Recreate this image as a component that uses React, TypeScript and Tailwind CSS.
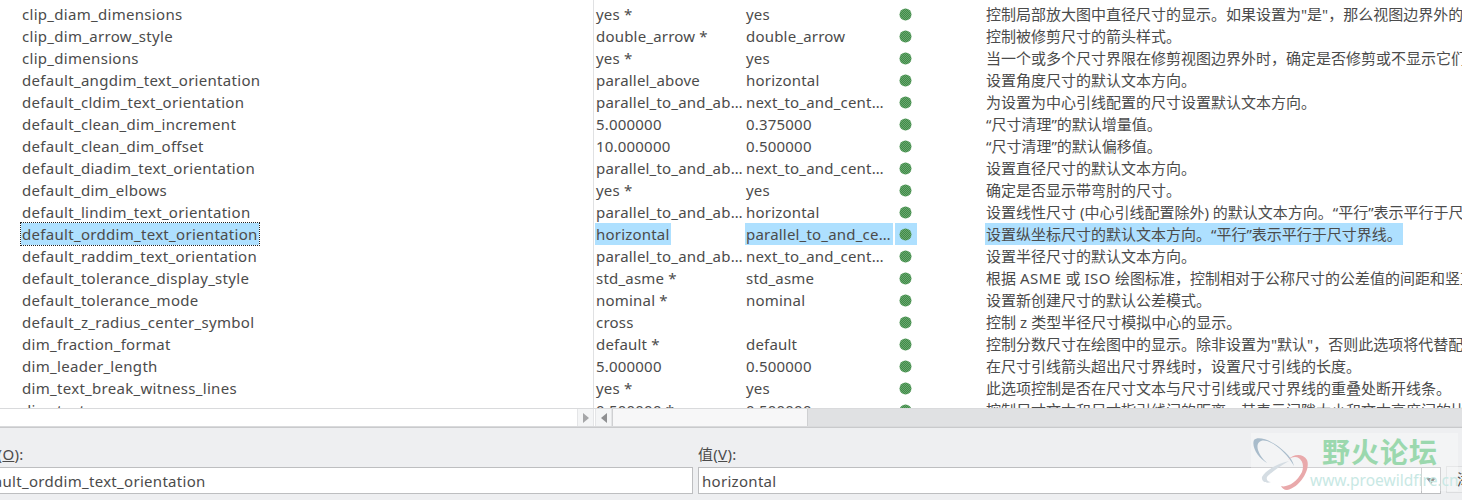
type Row = {
  name: string
  value: string
  active: string
  description: string
  selected?: boolean
}

const rows: Row[] = [
  { name: 'center_leader_size', value: 'no', active: 'no', description: '控制中心引线的大小。' },
  { name: 'clip_diam_dimensions', value: 'yes *', active: 'yes', description: '控制局部放大图中直径尺寸的显示。如果设置为"是"，那么视图边界外的尺寸将被修剪。' },
  { name: 'clip_dim_arrow_style', value: 'double_arrow *', active: 'double_arrow', description: '控制被修剪尺寸的箭头样式。' },
  { name: 'clip_dimensions', value: 'yes *', active: 'yes', description: '当一个或多个尺寸界限在修剪视图边界外时，确定是否修剪或不显示它们。' },
  { name: 'default_angdim_text_orientation', value: 'parallel_above', active: 'horizontal', description: '设置角度尺寸的默认文本方向。' },
  { name: 'default_cldim_text_orientation', value: 'parallel_to_and_above_leader', active: 'next_to_and_centered', description: '为设置为中心引线配置的尺寸设置默认文本方向。' },
  { name: 'default_clean_dim_increment', value: '5.000000', active: '0.375000', description: '“尺寸清理”的默认增量值。' },
  { name: 'default_clean_dim_offset', value: '10.000000', active: '0.500000', description: '“尺寸清理”的默认偏移值。' },
  { name: 'default_diadim_text_orientation', value: 'parallel_to_and_above_leader', active: 'next_to_and_centered', description: '设置直径尺寸的默认文本方向。' },
  { name: 'default_dim_elbows', value: 'yes *', active: 'yes', description: '确定是否显示带弯肘的尺寸。' },
  { name: 'default_lindim_text_orientation', value: 'parallel_to_and_above_leader', active: 'horizontal', description: '设置线性尺寸 (中心引线配置除外) 的默认文本方向。“平行”表示平行于尺寸界线。' },
  { name: 'default_orddim_text_orientation', value: 'horizontal', active: 'parallel_to_and_centered', description: '设置纵坐标尺寸的默认文本方向。“平行”表示平行于尺寸界线。', selected: true },
  { name: 'default_raddim_text_orientation', value: 'parallel_to_and_above_leader', active: 'next_to_and_centered', description: '设置半径尺寸的默认文本方向。' },
  { name: 'default_tolerance_display_style', value: 'std_asme *', active: 'std_asme', description: '根据 ASME 或 ISO 绘图标准，控制相对于公称尺寸的公差值的间距和竖直对齐。' },
  { name: 'default_tolerance_mode', value: 'nominal *', active: 'nominal', description: '设置新创建尺寸的默认公差模式。' },
  { name: 'default_z_radius_center_symbol', value: 'cross', active: '', description: '控制 z 类型半径尺寸模拟中心的显示。' },
  { name: 'dim_fraction_format', value: 'default *', active: 'default', description: '控制分数尺寸在绘图中的显示。除非设置为"默认"，否则此选项将代替配置文件设置。' },
  { name: 'dim_leader_length', value: '5.000000', active: '0.500000', description: '在尺寸引线箭头超出尺寸界线时，设置尺寸引线的长度。' },
  { name: 'dim_text_break_witness_lines', value: 'yes *', active: 'yes', description: '此选项控制是否在尺寸文本与尺寸引线或尺寸界线的重叠处断开线条。' },
  { name: 'dim_text_gap', value: '0.500000 *', active: '0.500000', description: '控制尺寸文本和尺寸指引线间的距离。其表示间隙大小和文本高度间的比值。' },
]

const uiFont = "font-['Noto_Sans','Noto_Sans_CJK_SC',sans-serif]"

const StatusDot = () => (
  <svg width="13" height="13" viewBox="0 0 13 13">
    <defs>
      <pattern id="dot-dither" width="2" height="2" patternUnits="userSpaceOnUse">
        <rect width="2" height="2" fill="#6aa86e" />
        <rect width="1" height="1" fill="#3f8a49" />
        <rect x="1" y="1" width="1" height="1" fill="#3f8a49" />
      </pattern>
    </defs>
    <circle cx="6.5" cy="6.5" r="6" fill="url(#dot-dither)" />
  </svg>
)

// latin words in the descriptions run a bit wider than the cjk font gives
const DescriptionText = ({ text }: { text: string }) => (
  <>
    {text.split(/([A-Za-z]+)/).map((part, index) =>
      index % 2 === 1 ? (
        <span key={index} className="tracking-[0.5px]">
          {part}
        </span>
      ) : (
        part
      ),
    )}
  </>
)

const ConfigRow = ({ row }: { row: Row }) => {
  const highlight = row.selected ? 'bg-[#aee0ff]' : ''
  return (
    <div className="flex h-[22px] items-center whitespace-nowrap leading-[22px]">
      <div className="w-[593px] shrink-0 pl-[21px] tracking-[0.3px]">
        <span className={`inline-block h-[22px] px-px ${highlight} ${row.selected ? 'outline-1 outline-dotted outline-[#222]' : ''}`}>
          {row.name}
        </span>
      </div>
      <div className="w-[152px] shrink-0 border-l border-[#e0e1e3] pl-px tracking-[0.2px]">
        <span className={`inline-block h-[22px] max-w-[150px] truncate align-top px-px ${highlight}`}>{row.value}</span>
      </div>
      <div className="w-[150px] shrink-0 pr-[2px] tracking-[0.2px]">
        <span className={`block h-[22px] truncate px-px ${highlight}`}>{row.active}</span>
      </div>
      <div className={`flex h-[22px] w-[22px] shrink-0 items-center justify-center pr-[2px] ${highlight}`}>
        <StatusDot />
      </div>
      <div className="ml-[68px] min-w-0 flex-1 overflow-hidden">
        <span className={`inline-block h-[22px] px-px ${highlight}`}>
          <DescriptionText text={row.description} />
        </span>
      </div>
    </div>
  )
}

const Watermark = () => (
  <div className="pointer-events-none absolute left-[1251px] top-[433px] flex h-[58px] w-[207px] bg-white/30">
    <svg width="80" height="65" viewBox="0 0 80 65" className="-ml-[6px] -mt-[3px] shrink-0">
      <path d="M9 10 C14 5 30 12 40 22 C45 27 48 31 49 36 C44 26 32 14 22 11 C15 9 11 13 13 20 C15 26 18 29 22 33 C14 29 6 17 9 10Z" fill="#a9bccb" />
      <path d="M17 47 C20 40 34 33 44 31 C36 36 26 42 22 47 C21 50 23 52 26 52 C22 54 16 52 17 47Z" fill="#d5dde3" />
      <path d="M43 30 C48 24 58 23 62 30 C66 40 54 58 42 60 C39 60 37 58 36 56 C42 58 52 52 57 42 C60 34 56 27 50 27 C47 27 45 28 43 30Z" fill="#e9a9ab" />
    </svg>
    <div className="-ml-[15px] flex min-w-0 flex-col">
      <span className="ml-[12px] mt-[1px] text-[28px] font-bold leading-[36px] tracking-[1px] text-[#9bd8ae]">野火论坛</span>
      <span className="text-[15.5px] leading-[20px] text-[#c8e8e4]">www.proewildfire.cn</span>
    </div>
  </div>
)

export default function App() {
  return (
    <div className={`relative flex h-[500px] w-[1462px] flex-col overflow-hidden bg-white text-[15px] text-[#4b4b4b] ${uiFont}`}>
      <div className="h-[408px] shrink-0 overflow-hidden">
        <div className="-mt-[19px]">
          {rows.map((row) => (
            <ConfigRow key={row.name} row={row} />
          ))}
        </div>
      </div>

      <div className="flex h-[19px] shrink-0 border-t border-b border-[#d9dadc]">
        <div className="w-[577px] shrink-0" />
        <div className="flex w-[17px] shrink-0 items-center justify-center border-x border-[#e4e5e7] bg-[#f4f5f6]">
          <span className="h-0 w-0 border-y-[5px] border-l-[6px] border-y-transparent border-l-[#a5a6a8]" />
        </div>
        <div className="ml-px flex w-[17px] shrink-0 items-center justify-center border-x border-[#e4e5e7] bg-[#f4f5f6]">
          <span className="h-0 w-0 border-y-[5px] border-r-[6px] border-y-transparent border-r-[#8f9092]" />
        </div>
        <div className="w-[196px] shrink-0 border-x border-[#cfd0d2] bg-[#f7f7f8]" />
        <div className="flex-1 bg-[#e0e1e3]" />
      </div>

      <div className="flex-1 border-t border-[#c9cacc] bg-[#eeeff1] pt-[13px] tracking-[0.3px]">
        <div className="flex items-start gap-[5px]">
          <div className="-ml-[34px] w-[727px] shrink-0">
            <div className="h-[26px] pl-px leading-[26px]">选项(<span className="underline">O</span>):</div>
            <div className="h-[27px] border border-[#bdbec0] bg-white pl-[3px] pt-px leading-[25px]">default_orddim_text_orientation</div>
          </div>
          <div className="w-[743px] shrink-0">
            <div className="h-[26px] leading-[26px]">值(<span className="underline">V</span>):</div>
            <div className="flex h-[27px] items-center justify-between border border-[#bdbec0] bg-white pl-[3px] leading-[25px]">
              <span className="pt-px">horizontal</span>
              <span className="flex h-full w-[19px] items-center justify-center border-l border-[#bdbec0]">
                <span className="h-0 w-0 border-x-[5px] border-t-[6px] border-x-transparent border-t-[#666]" />
              </span>
            </div>
          </div>
          <div className="mt-[25px] h-[27px] w-[60px] shrink-0 border border-[#dcdddf] bg-[#f0f1f2] pl-[10px] leading-[25px]">添加</div>
        </div>
      </div>

      <Watermark />
    </div>
  )
}
